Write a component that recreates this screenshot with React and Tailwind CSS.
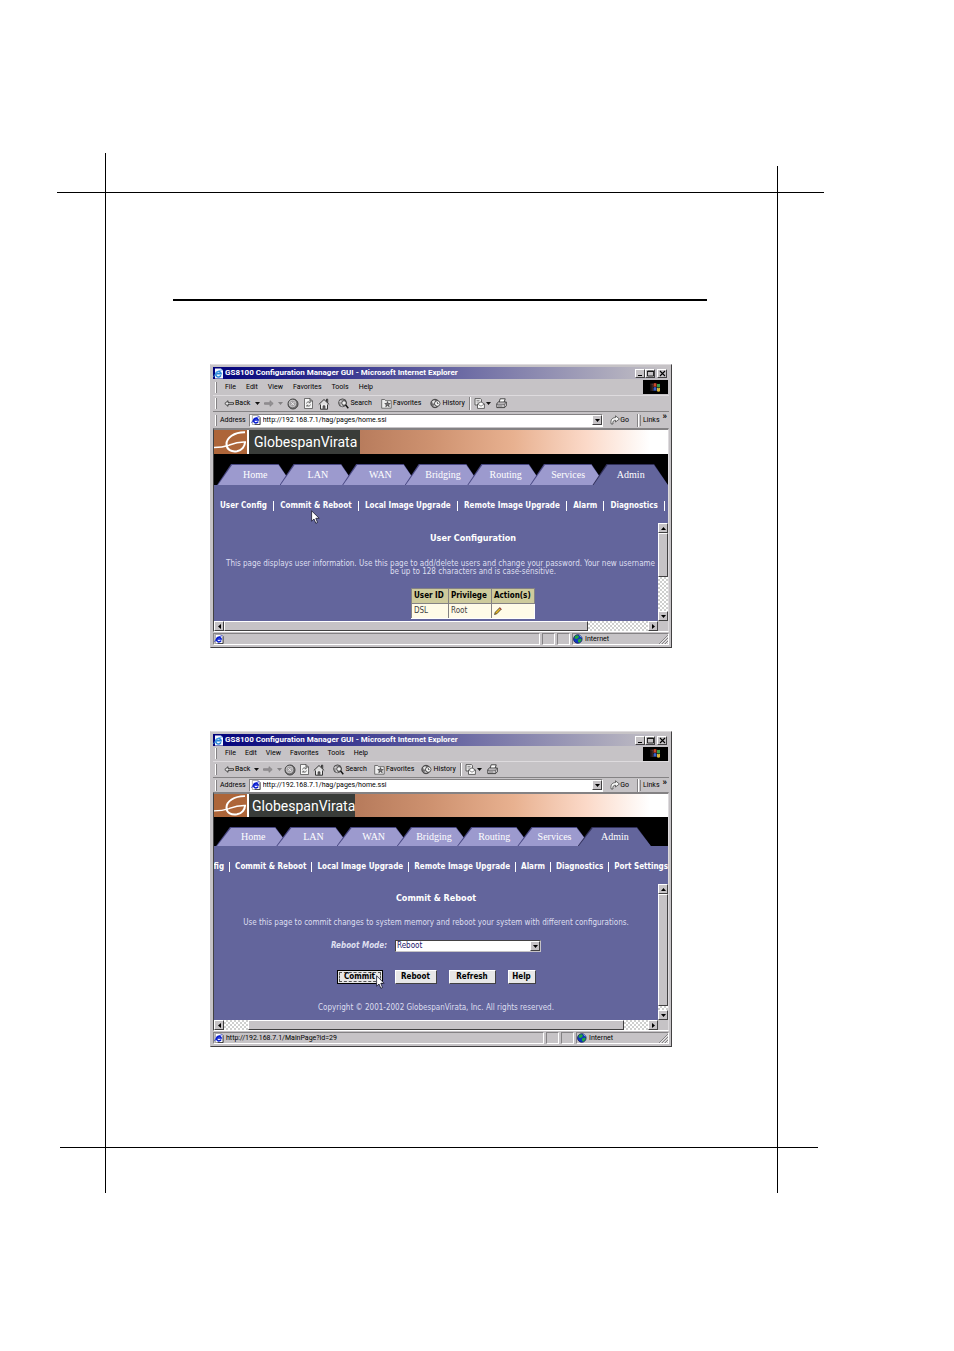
import React from 'react';

const ui = "font-['Roboto','DejaVu_Sans',sans-serif]";
const verdana = "font-['DejaVu_Sans_Condensed','DejaVu_Sans',sans-serif]";
const dither = 'bg-[#d6d6d6] bg-[conic-gradient(#fff_25%,#cecfce_0_50%,#fff_0_75%,#cecfce_0)] bg-[length:4px_4px]';
const raised = 'border border-t-white border-l-white border-r-[#424142] border-b-[#424142] bg-[#c6c3c6]';
const sunken = 'border border-t-[#848284] border-l-[#848284] border-r-white border-b-white';

function IeIcon() {
  return (
    <svg className="size-[10px] shrink-0" viewBox="0 0 11 11" aria-hidden="true">
      <path d="M1.5.5h6.500l2 2v8h-8.500z" fill="#fff" stroke="#848284" strokeWidth=".7" />
      <path d="M10 2.500v8H4" fill="none" stroke="#222" strokeWidth=".8" />
      <path d="M7.800 7.200A2.600 2.600 0 1 1 8 5.600H3.200" fill="none" stroke="#0a1fd0" strokeWidth="1.700" />
      <path d="M.6 8.600C2 5.500 5.500 2.200 9 1.800" fill="none" stroke="#0a1fd0" strokeWidth=".9" />
    </svg>
  );
}

function TitleIcon() {
  return (
    <svg className="size-[11px] shrink-0" viewBox="0 0 11 11" aria-hidden="true">
      <path d="M2 .5h6l2 2v8H2z" fill="#f4f8ff" />
      <path d="M7.900 7.400A2.700 2.700 0 1 1 8.100 5.800H3.200" fill="none" stroke="#2a86d8" strokeWidth="1.600" />
      <path d="M.6 9C2 5.500 5.500 2.200 9.300 1.800" fill="none" stroke="#4aa0e8" strokeWidth=".9" />
    </svg>
  );
}

function Arrow({ dir = 'right', dim }) {
  return (
    <svg className="h-[7px] w-[10px] shrink-0" viewBox="0 0 10 7" aria-hidden="true">
      <path
        d={dir === 'left' ? 'M4 .7 .8 3.500 4 6.300V4.300H9.500V2.700H4z' : 'M6 .7 9.200 3.500 6 6.300V4.300H.5V2.700H6z'}
        fill={dim ? '#949294' : '#e8e8e8'}
        stroke={dim ? '#848284' : '#222'}
        strokeWidth=".8"
      />
    </svg>
  );
}

function Caret({ dim }) {
  return (
    <svg className="h-[3px] w-[5px] shrink-0" viewBox="0 0 5 3" aria-hidden="true">
      <path d="M0 0h5L2.500 3z" fill={dim ? '#848284' : '#111'} />
    </svg>
  );
}

function StopIcon() {
  return (
    <svg className="size-[12px] shrink-0" viewBox="0 0 12 12" aria-hidden="true">
      <circle cx="6" cy="6" r="5" fill="#737173" stroke="#444" />
      <circle cx="5.500" cy="5.500" r="3.400" fill="#a5a2a5" stroke="#d8d8d8" strokeWidth=".7" />
      <path d="m4.200 4.200 3 3m0-3-3 3" stroke="#efefef" strokeWidth=".9" />
    </svg>
  );
}

function RefreshIcon() {
  return (
    <svg className="size-[11px] shrink-0" viewBox="0 0 11 11" aria-hidden="true">
      <path d="M1.500.5H7l2.500 2.500v7.500h-8z" fill="#f7f7f7" stroke="#555" strokeWidth=".8" />
      <path d="M7 .5V3h2.500" fill="none" stroke="#333" strokeWidth=".8" />
      <path d="M3.500 5.500A2 2 0 0 1 7 4.500M7.500 6.500A2 2 0 0 1 4 7.500M7.200 3.300v1.500H5.700M3.800 8.700V7.200h1.500" fill="none" stroke="#555" strokeWidth=".8" />
    </svg>
  );
}

function HomeIcon() {
  return (
    <svg className="size-[12px] shrink-0" viewBox="0 0 12 12" aria-hidden="true">
      <path d="M2.500 6v5.200h7V6" fill="#efefef" stroke="#222" strokeWidth=".9" />
      <path d="m.8 6.500 5.200-5 5.200 5M8.500 3.500V1.200h1.200v3.500" fill="#dedede" stroke="#222" strokeWidth=".9" />
      <path d="M5 11V7.800h2V11" fill="#737173" stroke="#222" strokeWidth=".6" />
    </svg>
  );
}

function SearchIcon() {
  return (
    <svg className="size-[11px] shrink-0" viewBox="0 0 11 11" aria-hidden="true">
      <circle cx="4.500" cy="4.800" r="3.900" fill="#a5a2a5" stroke="#444" strokeWidth=".9" />
      <path d="M1.500 3.500c2-1 3 1 2 2.500S5 8 4 8.500" fill="none" stroke="#efefef" strokeWidth=".9" />
      <circle cx="6" cy="5" r="2.300" fill="#f0f0f0" stroke="#222" strokeWidth=".8" />
      <path d="m7.700 7 2.600 3.200" stroke="#111" strokeWidth="1.400" />
    </svg>
  );
}

function FavIcon() {
  return (
    <svg className="size-[11px] shrink-0" viewBox="0 0 11 11" aria-hidden="true">
      <path d="M.7 1.500h3l1 1.200h5.500v7.500H.7z" fill="#efefef" stroke="#555" strokeWidth=".8" />
      <path d="m6.500 3.500.8 2h2l-1.600 1.300.6 2-1.800-1.200-1.800 1.200.6-2L3.700 5.500h2z" fill="#737173" stroke="#222" strokeWidth=".5" />
    </svg>
  );
}

function HistoryIcon() {
  return (
    <svg className="size-[11px] shrink-0" viewBox="0 0 11 11" aria-hidden="true">
      <circle cx="5" cy="5.500" r="4.200" fill="#737173" stroke="#333" strokeWidth=".8" />
      <path d="M2 3.500 4.500 2l.5 2-2 2zM3 8l2-1 1 2z" fill="#e7e7e7" />
      <circle cx="7.300" cy="5.500" r="2.700" fill="#fff" stroke="#222" strokeWidth=".7" />
      <path d="M7.300 4v1.700H8.600" fill="none" stroke="#111" strokeWidth=".7" />
    </svg>
  );
}

function MailIcon() {
  return (
    <svg className="size-[11px] shrink-0" viewBox="0 0 11 11" aria-hidden="true">
      <path d="M1 .6h5.500l1 1V7H1z" fill="#efefef" stroke="#444" strokeWidth=".8" />
      <path d="M2.500 2.500h3M2.500 4h3" stroke="#737173" strokeWidth=".7" />
      <path d="M3.500 6 7 3.800 10.400 6v4.400H3.500z" fill="#fff" stroke="#444" strokeWidth=".8" />
      <path d="m3.500 6 3.500 2.200L10.400 6" fill="none" stroke="#555" strokeWidth=".7" />
    </svg>
  );
}

function PrintIcon() {
  return (
    <svg className="size-[11px] shrink-0" viewBox="0 0 11 11" aria-hidden="true">
      <path d="m3 4.500 1.200-3.700h5L8 4.500" fill="#fff" stroke="#222" strokeWidth=".8" />
      <path d="M.8 5.500 2.500 4h7.800v3.800L8.600 9.600H.8z" fill="#dedbde" stroke="#222" strokeWidth=".8" />
      <path d="M.8 6.200h7.400l2-1.800M8.300 6.200v3.200M2 8h4.500" fill="none" stroke="#333" strokeWidth=".7" />
    </svg>
  );
}

function GoIcon() {
  return (
    <svg className="size-[10px] shrink-0" viewBox="0 0 10 10" aria-hidden="true">
      <path d="M1.200 9C.3 5 2 2.600 5.500 2.600V.8L9.400 4 5.500 7V5.200C3.500 5.200 2.300 6.500 3 9z" fill="#f7f7f7" stroke="#333" strokeWidth=".7" />
    </svg>
  );
}

function WindowsFlag() {
  return (
    <svg className="size-[11px]" viewBox="0 0 11 11" aria-hidden="true">
      <path d="M3.500 1.500q1.500-1 3 0v3.500q-1.500-1-3 0z" fill="#c8472c" />
      <path d="M7 1.700q1.500.8 3 0v3.500q-1.500.8-3 0z" fill="#3c9a4c" />
      <path d="M3.500 5.600q1.500-1 3 0V9q-1.500-1-3 0z" fill="#3a62c8" />
      <path d="M7 5.800q1.500.8 3 0v3.500q-1.500.8-3 0z" fill="#d8b43a" />
      <path d="M.6 2.200h1m.5 0h1M.6 4h1m.5 0h1M.6 6h1m.5 0h1M.6 8h1m.5 0h1" stroke="#8a5a5a" strokeWidth=".9" />
    </svg>
  );
}

function Globe() {
  return (
    <svg className="size-[10px] shrink-0" viewBox="0 0 10 10" aria-hidden="true">
      <circle cx="4.800" cy="5" r="4.300" fill="#1038c0" stroke="#101050" strokeWidth=".7" />
      <path d="M2 1.800 5 1.200 6 3 4 5 1.500 4.500zM5 5.500l3-1 .8 1.500L6.500 8.800 5 8z" fill="#22a83c" />
      <path d="M6.500 1.500 8.500 3" stroke="#bfe8ff" strokeWidth=".8" />
    </svg>
  );
}

function Pointer({ className }) {
  return (
    <svg className={`absolute z-10 h-[14px] w-[9px] ${className}`} viewBox="0 0 9 14" aria-hidden="true">
      <path d="M.6.8v10.400L3 9l1.800 4.300 1.700-.8L4.800 8.300h3.400z" fill="#fff" stroke="#15152c" strokeWidth=".8" />
    </svg>
  );
}

function Grip() {
  return <span className="ml-[2px] h-[11px] w-[2px] shrink-0 border-l border-r border-l-white border-r-[#848284]" />;
}

function Triangle({ dir }) {
  const d = {
    up: 'M0 4h5L2.500 1z',
    down: 'M0 1h5L2.500 4z',
    left: 'M4 0v5L1 2.500z',
    right: 'M1 0v5l3-2.500z',
  }[dir];
  return (
    <svg className="size-[5px]" viewBox="0 0 5 5" aria-hidden="true">
      <path d={d} fill="#000" />
    </svg>
  );
}

function ScrollButton({ dir }) {
  return (
    <button type="button" aria-label={`Scroll ${dir}`} className={`flex size-[10px] shrink-0 items-center justify-center ${raised}`}>
      <Triangle dir={dir} />
    </button>
  );
}

function CaptionButton({ label, children }) {
  return (
    <button type="button" aria-label={label} className={`flex h-[9px] w-[10px] items-center justify-center ${raised}`}>
      <svg className="size-[7px]" viewBox="0 0 7 7" aria-hidden="true">
        {children}
      </svg>
    </button>
  );
}

function ToolButton({ icon, label, className = '' }) {
  return (
    <button type="button" className={`flex items-center gap-px ${className}`}>
      {icon}
      {label}
    </button>
  );
}

function BrandBanner({ s }) {
  return (
    <div className={`flex bg-[linear-gradient(90deg,#b5795a_30%,#ce9270_48%,#e8b190_66%,#fbd9c8_82%,#fff_96%)] ${s.banner}`}>
      <svg className="h-full w-[33px] shrink-0 bg-[#ad6539]" viewBox="0 0 33 24" preserveAspectRatio="none" aria-hidden="true">
        <path d="M31 2.200C20 2 12.500 8 12.500 14c0 6 5 8 10.500 7.200 5-.9 8-5 8-9.200" fill="none" stroke="#fff" strokeWidth="2" />
        <path d="M32 12c-8-.5-12 1.200-17 3.200C10 17 5 17.600 0 17.600" fill="none" stroke="#fff" strokeWidth="1.500" />
      </svg>
      <div className={`flex shrink-0 items-center border-l-2 border-l-white bg-[#393c39] font-['Roboto',sans-serif] text-[14px] leading-none text-white ${s.brand}`}>
        GlobespanVirata
      </div>
    </div>
  );
}

const tabNames = ['Home', 'LAN', 'WAN', 'Bridging', 'Routing', 'Services', 'Admin'];

function Tabs({ s }) {
  return (
    <nav aria-label="Sections" className={`flex bg-black pt-[10px] ${s.tabPad}`}>
      {tabNames.map((name, i) => (
        <a
          key={name}
          href={`#${name}`}
          className={`flex min-w-0 flex-1 pt-px pl-px [clip-path:polygon(14px_0,calc(100%_-_14px)_0,100%_100%,0_100%)] ${i ? '-ml-[13px]' : ''} ${name === 'Admin' ? 'bg-[#31305a]' : 'bg-[#4a4984]'} ${s.tabH}`}
        >
          <span
            className={`flex flex-1 items-center justify-center font-['Liberation_Serif',serif] text-[10px] leading-none text-white [clip-path:polygon(14px_0,calc(100%_-_14px)_0,100%_100%,0_100%)] ${name === 'Admin' ? 'bg-[#63659c]' : 'bg-[#9c9ace]'}`}
          >
            {name}
          </span>
        </a>
      ))}
    </nav>
  );
}

function SubNav({ items, className }) {
  return (
    <nav aria-label="Admin pages" className={`flex h-[38px] items-center overflow-hidden pt-[4px] whitespace-nowrap text-[8px] leading-[10px] font-bold text-white ${verdana} ${className}`}>
      {items.map((t, i) =>
        t === '|' ? (
          <span key={i} className="h-[10px] w-px shrink-0 bg-white" />
        ) : (
          <a key={i} href="#page" className="shrink-0">
            {t}
          </a>
        ),
      )}
    </nav>
  );
}

function BrowserWindow({ s, status, subnav, vbar, hbar, pointer, children }) {
  return (
    <section className={`relative border border-t-[#dedbde] border-l-[#c6c3c6] border-r-[#424142] border-b-[#424142] bg-[#c6c3c6] p-[2px] text-[7px] leading-[9px] text-black ${ui} ${s.gap}`}>
      <header className="flex h-[12px] items-center bg-[linear-gradient(90deg,#00007b,#c6c3c6)] pr-[2px]">
        <TitleIcon />
        <h2 className="ml-px flex-1 text-[8px] leading-[10px] font-bold whitespace-nowrap text-white">GS8100 Configuration Manager GUI - Microsoft Internet Explorer</h2>
        <CaptionButton label="Minimize">
          <path d="M1 5.500h4" stroke="#000" />
        </CaptionButton>
        <CaptionButton label="Maximize">
          <path d="M.5 1h6v5h-6zM.5 1.500h6" fill="none" stroke="#000" strokeWidth=".8" />
        </CaptionButton>
        <span className="w-[2px]" />
        <CaptionButton label="Close">
          <path d="m1 1 5 5m0-5-5 5" stroke="#000" strokeWidth="1.100" />
        </CaptionButton>
      </header>

      <div className={`flex items-center ${s.menuH}`}>
        <Grip />
        <div className={`ml-[8px] flex flex-1 ${s.menuGap}`}>
          {['File', 'Edit', 'View', 'Favorites', 'Tools', 'Help'].map((m) => (
            <button key={m} type="button">
              {m}
            </button>
          ))}
        </div>
        <span className="mr-px flex h-[14px] w-[25px] items-center justify-center bg-black">
          <WindowsFlag />
        </span>
      </div>

      <div className="flex h-[16px] items-center border-t border-t-[#dedbde]">
        <Grip />
        <ToolButton className="ml-[7px]" icon={<Arrow dir="left" />} label="Back" />
        <span className={`flex items-center gap-[4px] ${s.toolGap}`}>
          <Caret />
          <button type="button" aria-label="Forward">
            <Arrow dim />
          </button>
          <Caret dim />
        </span>
        <span className={`flex items-center ${s.iconGap}`}>
          <button type="button" aria-label="Stop">
            <StopIcon />
          </button>
          <button type="button" aria-label="Refresh">
            <RefreshIcon />
          </button>
          <button type="button" aria-label="Home">
            <HomeIcon />
          </button>
        </span>
        <span className={`ml-[8px] flex items-center ${s.labelGap}`}>
          <ToolButton icon={<SearchIcon />} label="Search" />
          <ToolButton icon={<FavIcon />} label="Favorites" />
          <ToolButton icon={<HistoryIcon />} label="History" />
        </span>
        <span className="ml-[4px] h-[13px] w-[2px] border-l border-r border-l-[#848284] border-r-white" />
        <button type="button" aria-label="Mail" className="ml-[3px] flex items-center gap-px">
          <MailIcon />
          <Caret />
        </button>
        <button type="button" aria-label="Print" className="ml-[5px]">
          <PrintIcon />
        </button>
      </div>

      <div className={`flex items-center border-t border-t-[#848284] ${s.addrH}`}>
        <Grip />
        <label htmlFor={s.id} className="ml-[3px]">
          Address
        </label>
        <div className={`ml-[3px] flex h-[13px] min-w-0 flex-1 items-center bg-white pl-px ${sunken} border-t-[#424142]`}>
          <IeIcon />
          <input id={s.id} readOnly value="http://192.168.7.1/hag/pages/home.ssi" className="ml-[2px] min-w-0 flex-1 outline-none" />
          <button type="button" aria-label="Show address list" className={`flex size-[10px] items-center justify-center ${raised}`}>
            <Triangle dir="down" />
          </button>
        </div>
        <button type="button" className="ml-[7px] flex items-center">
          <GoIcon />
          Go
        </button>
        <span className="ml-[8px] flex items-center gap-px">
          <span className="h-[13px] w-[2px] border-l border-r border-l-[#848284] border-r-white" />
          <span className="h-[11px] w-px bg-[#848284]" />
        </span>
        <span className="ml-[2px]">Links</span>
        <span className="ml-[3px] mr-[2px] self-start text-[9px] font-bold">»</span>
      </div>

      <div className="border border-t-2 border-t-[#848284] border-l-[#424142] border-r-[#dedbde] border-b-white">
        <BrandBanner s={s} />
        <Tabs s={s} />
        <div className="bg-[#63659c]">
          <SubNav {...subnav} />
          <div className={`flex ${s.frameH}`}>
            <div className={`min-w-0 flex-1 overflow-hidden text-[8px] leading-[8px] text-[#dedff0] ${verdana}`}>{children}</div>
            <div className={`flex w-[10px] shrink-0 flex-col ${dither}`}>
              <ScrollButton dir="up" />
              <span className={`${raised} ${vbar}`} />
              <span className="flex-1" />
              <ScrollButton dir="down" />
            </div>
          </div>
        </div>
        <div className="flex h-[10px] bg-[#c6c3c6]">
          <div className={`flex flex-1 ${dither}`}>
            <ScrollButton dir="left" />
            <span className={hbar[0]} />
            <span className={`${raised} flex-1`} />
            <span className={hbar[1]} />
            <ScrollButton dir="right" />
          </div>
          <span className="w-[10px]" />
        </div>
      </div>

      <footer className="mt-px flex h-[12px] gap-[2px]">
        <span className={`flex flex-1 items-center gap-[2px] ${sunken}`}>
          <IeIcon />
          {status}
        </span>
        <span className={`w-[13px] ${sunken}`} />
        <span className={`w-[13px] ${sunken}`} />
        <span className={`flex items-center gap-[2px] ${sunken} ${s.zoneW}`}>
          <Globe />
          <span className="flex-1">Internet</span>
          <svg className="size-[9px] self-end" viewBox="0 0 9 9" aria-hidden="true">
            <path d="M0 9 9 0M3 9l6-6M6 9l3-3" stroke="#848284" strokeWidth="1" />
            <path d="M1 9l8-8M4 9l5-5M7 9l2-2" stroke="#fff" strokeWidth=".6" />
          </svg>
        </span>
      </footer>
      {pointer}
    </section>
  );
}

const wide = {
  id: 'address-users',
  gap: 'mt-[63px]',
  menuH: 'h-[16px]',
  menuGap: 'gap-[10px]',
  toolGap: 'ml-[5px]',
  iconGap: 'ml-[4px] gap-[4px]',
  labelGap: 'gap-[9px]',
  addrH: 'h-[17px]',
  banner: 'h-[24px]',
  brand: 'w-[113px] pl-[5px]',
  tabH: 'h-[21px]',
  tabPad: 'pl-[3px]',
  frameH: 'h-[98px]',
  zoneW: 'w-[97px]',
};

const narrow = {
  id: 'address-reboot',
  gap: 'mt-[83px]',
  menuH: 'h-[15px]',
  menuGap: 'gap-[9px]',
  toolGap: 'ml-[4px]',
  iconGap: 'ml-[2px] gap-[3px]',
  labelGap: 'gap-[7px]',
  addrH: 'h-[15px]',
  banner: 'h-[23px]',
  brand: 'w-[108px] pl-[3px]',
  tabH: 'h-[19px]',
  tabPad: 'pl-[2px] pr-[17px]',
  frameH: 'h-[136px]',
  zoneW: 'w-[93px]',
};

const btn = 'h-[14px] border border-t-white border-l-white border-r-[#424142] border-b-[#424142] bg-[#e7e7e7] text-center font-bold text-black';

export default function App() {
  return (
    <div className="relative min-h-screen bg-white">
      <span className="absolute top-[192px] right-[130px] left-[57px] h-px bg-black" />
      <span className="absolute right-[136px] bottom-[203px] left-[60px] h-px bg-black" />
      <span className="absolute top-[153px] bottom-[158px] left-[105px] w-px bg-black" />
      <span className="absolute top-[166px] right-[176px] bottom-[158px] w-px bg-black" />

      <main className="pt-[299px] pr-[247px] pb-[303px] pl-[173px]">
        <hr className="border-t-2 border-black" />
        <div className="pr-[35px] pl-[37px]">
          <BrowserWindow
            s={wide}
            status=""
            subnav={{
              items: ['User Config', '|', 'Commit & Reboot', '|', 'Local Image Upgrade', '|', 'Remote Image Upgrade', '|', 'Alarm', '|', 'Diagnostics', '|'],
              className: 'justify-between pr-[3px] pl-[6px]',
            }}
            vbar="h-[44px]"
            hbar={['w-0', 'w-[60px]']}
            pointer={<Pointer className="top-[145px] left-[100px]" />}
          >
            <div className="flex w-[518px] flex-col items-center pt-[10px]">
              <h3 className="text-[9px] leading-[11px] font-bold text-white">User Configuration</h3>
              <p className="mt-[16px] self-stretch pl-[12px] whitespace-nowrap">
                This page displays user information. Use this page to add/delete users and change your password. Your new username
              </p>
              <p>be up to 128 characters and is case-sensitive.</p>
              <table className="mt-[12px] w-[124px] table-fixed border-collapse bg-[#fffbe7] text-left text-[8px] leading-[10px] text-[#424142]">
                <thead className="bg-[#cecb9c] text-black">
                  <tr className="h-[15px]">
                    <th className="w-[37px] border border-[#848284] pl-[2px] whitespace-nowrap">User ID</th>
                    <th className="w-[43px] border border-[#848284] pl-[2px]">Privilege</th>
                    <th className="border border-[#848284] pl-[2px] whitespace-nowrap">Action(s)</th>
                  </tr>
                </thead>
                <tbody>
                  <tr className="h-[15px]">
                    <td className="border border-[#848284] border-b-white pl-[2px]">DSL</td>
                    <td className="border border-[#848284] border-b-white pl-[2px]">Root</td>
                    <td className="border border-[#848284] border-r-white border-b-white pl-[2px]">
                      <button type="button" aria-label="Edit user" className="block">
                        <svg className="size-[8px]" viewBox="0 0 9 9" aria-hidden="true">
                          <path d="m.6 8.400.9-2.600L6.400.8l1.800 1.600-5 5.200z" fill="#e8b820" stroke="#222" strokeWidth=".8" />
                          <path d="m6.200 1 1.900 1.600" stroke="#b04040" strokeWidth="1.200" />
                        </svg>
                      </button>
                    </td>
                  </tr>
                </tbody>
              </table>
            </div>
          </BrowserWindow>

          <BrowserWindow
            s={narrow}
            status="http://192.168.7.1/MainPage?id=29"
            subnav={{
              items: ['User Config', '|', 'Commit & Reboot', '|', 'Local Image Upgrade', '|', 'Remote Image Upgrade', '|', 'Alarm', '|', 'Diagnostics', '|', 'Port Settings'],
              className: 'justify-end gap-[5px]',
            }}
            vbar="h-[112px]"
            hbar={['w-[24px]', 'w-[24px]']}
          >
            <form className="flex flex-col items-center pt-[9px]" onSubmit={(e) => e.preventDefault()}>
              <h3 className="text-[9px] leading-[11px] font-bold text-white">Commit &amp; Reboot</h3>
              <p className="mt-[15px] whitespace-nowrap">Use this page to commit changes to system memory and reboot your system with different configurations.</p>
              <div className="mt-[13px] flex items-center gap-[8px]">
                <label htmlFor="reboot-mode" className="font-bold italic">
                  Reboot Mode:
                </label>
                <span className="flex w-[146px] items-center border border-t-[#424142] border-l-[#424142] border-r-[#c6c3c6] border-b-[#c6c3c6] bg-white">
                  <select id="reboot-mode" className="h-[10px] min-w-0 flex-1 appearance-none pl-px leading-[10px] text-[#21206b] outline-none">
                    <option>Reboot</option>
                  </select>
                  <span className={`flex size-[10px] items-center justify-center ${raised}`}>
                    <Triangle dir="down" />
                  </span>
                </span>
              </div>
              <div className="mt-[18px] flex gap-[12px]">
                <span className="relative">
                  <button type="submit" className="block h-[14px] w-[46px] border border-black bg-[#e7e7e7] p-px font-bold text-black">
                    <span className="block border border-dashed border-[#555] leading-[8px]">Commit</span>
                  </button>
                  <Pointer className="top-[5px] left-[39px]" />
                </span>
                <button type="button" className={`w-[42px] ${btn}`}>
                  Reboot
                </button>
                <button type="button" className={`w-[47px] ${btn}`}>
                  Refresh
                </button>
                <button type="button" className={`w-[28px] ${btn}`}>
                  Help
                </button>
              </div>
              <p className="mt-[20px]">Copyright © 2001-2002 GlobespanVirata, Inc. All rights reserved.</p>
            </form>
          </BrowserWindow>
        </div>
      </main>
    </div>
  );
}
